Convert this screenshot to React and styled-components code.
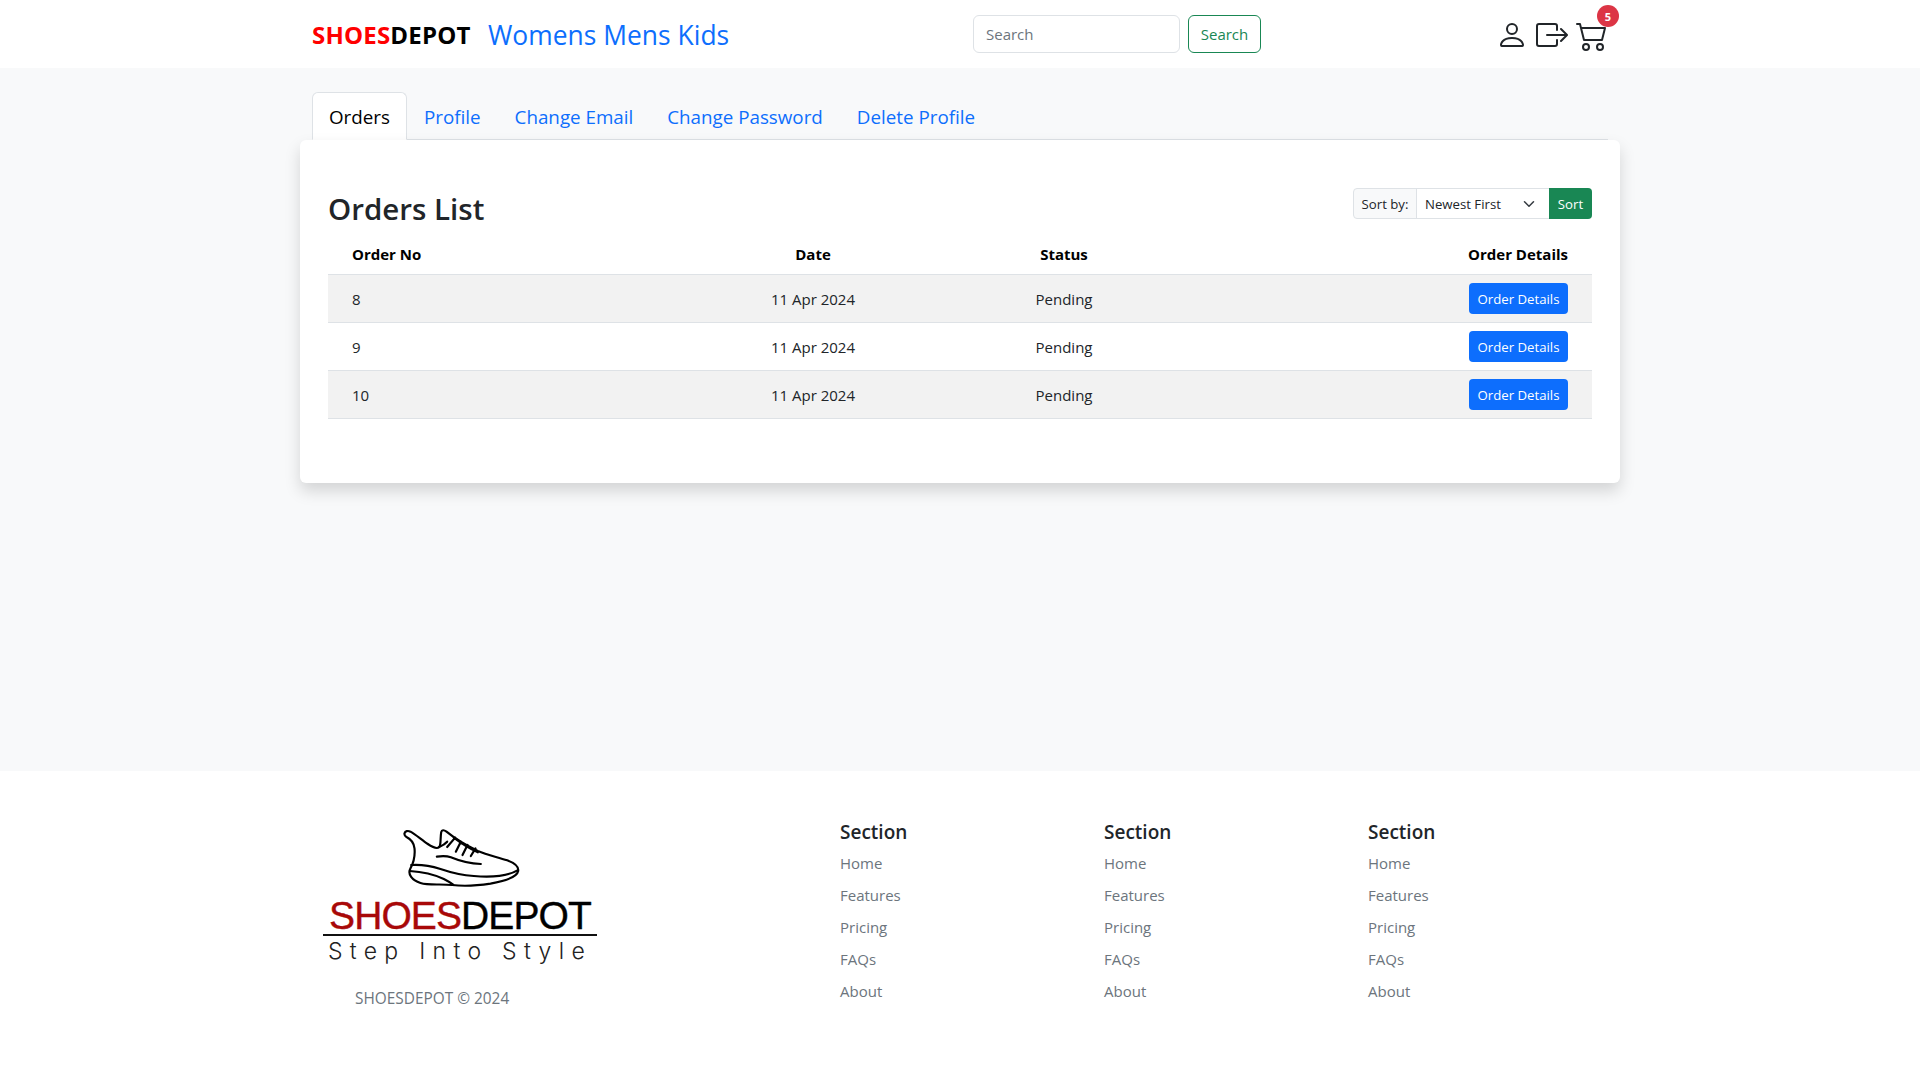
import styled, { createGlobalStyle } from 'styled-components';
import { BsPerson, BsBoxArrowRight, BsCart2 } from 'react-icons/bs';

const GlobalStyle = createGlobalStyle`
  * { box-sizing: border-box; }
  body {
    margin: 0;
    background: #f8f9fa;
    color: #212529;
    font-family: "Open Sans", "Noto Sans", sans-serif;
    font-size: 15px;
  }
  a { text-decoration: none; }
`;

const Page = styled.div`
  min-height: 100vh;
  display: flex;
  flex-direction: column;
`;

const Navbar = styled.header`
  height: 68px;
  background: #fff;
  display: flex;
  justify-content: center;
`;

const NavInner = styled.div`
  width: 1296px;
  display: flex;
  align-items: center;
  position: relative;
`;

const Brand = styled.a`
  width: 176px;
  font-size: 24px;
  font-weight: 700;
  letter-spacing: 0.2px;
  color: #000;
  span { color: #f00; }
`;

const NavLinks = styled.nav`
  display: flex;
  gap: 7px;
  font-size: 26.4px;
  width: 485px;
  padding-top: 1px;
  a { color: #0d6efd; }
`;

const SearchForm = styled.form`
  display: flex;
  gap: 8px;
`;

const SearchInput = styled.input`
  width: 207px;
  height: 38px;
  padding: 6px 12px;
  border: 1px solid #dee2e6;
  border-radius: 6px;
  background: #fff;
  font: inherit;
  color: #212529;
  &::placeholder { color: #6c757d; opacity: 1; }
`;

const SearchButton = styled.button`
  width: 73px;
  height: 38px;
  border: 1px solid #198754;
  border-radius: 6px;
  background: transparent;
  color: #198754;
  font: inherit;
`;

const Icons = styled.div`
  margin-left: auto;
  margin-top: 2px;
  display: flex;
  gap: 8px;
  position: relative;
  color: #212529;
  svg { display: block; }
`;

const Badge = styled.span`
  position: absolute;
  top: -14px;
  right: -11px;
  min-width: 22px;
  height: 22px;
  border-radius: 50%;
  background: #dc3545;
  color: #fff;
  font-size: 11px;
  font-weight: 700;
  display: flex;
  align-items: center;
  justify-content: center;
`;

const Main = styled.main`
  flex: 1;
  display: flex;
  flex-direction: column;
  align-items: center;
  padding-top: 24px;
`;

const Tabs = styled.ul`
  width: 1296px;
  height: 48px;
  margin: 0;
  padding: 0;
  list-style: none;
  display: flex;
  border-bottom: 1px solid #dee2e6;
`;

const Tab = styled.li`
  height: 48px;
  padding: 10px 16px 0;
  font-size: 18.8px;
  line-height: 28px;
  border: 1px solid ${(p) => (p.$active ? '#dee2e6' : 'transparent')};
  border-bottom-color: ${(p) => (p.$active ? '#fff' : 'transparent')};
  border-radius: 6px 6px 0 0;
  background: ${(p) => (p.$active ? '#fff' : 'transparent')};
  color: ${(p) => (p.$active ? '#000' : '#0d6efd')};
`;

const Card = styled.section`
  width: 1320px;
  height: 343px;
  padding: 48px 28px 0;
  background: #fff;
  border-radius: 6px;
  box-shadow: 0 8px 16px rgba(0, 0, 0, 0.15);
  position: relative;
`;

const CardHead = styled.div`
  height: 46px;
  display: flex;
  justify-content: space-between;
  align-items: flex-start;
`;

const Title = styled.h2`
  margin: 0;
  font-size: 29.5px;
  font-weight: 600;
  line-height: 42px;
`;

const SortGroup = styled.form`
  display: flex;
  height: 31px;
  font-size: 13.2px;
`;

const SortLabel = styled.label`
  width: 64px;
  display: flex;
  align-items: center;
  justify-content: center;
  background: #f8f9fa;
  border: 1px solid #dee2e6;
  border-radius: 4px 0 0 4px;
`;

const SortSelect = styled.select`
  width: 133px;
  margin-left: -1px;
  padding: 0 8px;
  appearance: none;
  border: 1px solid #dee2e6;
  border-right: 0;
  background: #fff url("data:image/svg+xml,%3csvg xmlns='http://www.w3.org/2000/svg' viewBox='0 0 16 16'%3e%3cpath fill='none' stroke='%23343a40' stroke-linecap='round' stroke-linejoin='round' stroke-width='2' d='m2 5 6 6 6-6'/%3e%3c/svg%3e") no-repeat right 14px center / 12px 12px;
  color: #212529;
  font: inherit;
`;

const SortButton = styled.button`
  width: 43px;
  border: 0;
  border-radius: 0 4px 4px 0;
  background: #198754;
  color: #fff;
  font: inherit;
`;

const Table = styled.table`
  width: 1264px;
  table-layout: fixed;
  border-collapse: collapse;
  font-size: 15px;
`;

const Th = styled.th`
  height: 40px;
  padding: 8px 24px;
  font-weight: 700;
  color: #000;
  text-align: ${(p) => p.$align || 'left'};
  border-bottom: 1px solid #dee2e6;
`;

const Row = styled.tr`
  background: ${(p) => (p.$striped ? '#f2f2f2' : '#fff')};
`;

const Td = styled.td`
  height: 48px;
  padding: 1px 24px 0;
  text-align: ${(p) => p.$align || 'left'};
  border-bottom: 1px solid #dee2e6;
`;

const DetailsButton = styled.button`
  width: 99px;
  height: 31px;
  padding: 0;
  border: 0;
  border-radius: 4px;
  background: #0d6efd;
  color: #fff;
  font-size: 13.2px;
  font-family: inherit;
  vertical-align: middle;
`;

const Footer = styled.footer`
  height: 294px;
  background: #fff;
  display: flex;
  justify-content: center;
`;

const FooterGrid = styled.div`
  width: 1320px;
  padding-top: 48px;
  display: grid;
  grid-template-columns: 528px repeat(3, 264px);
`;

const LogoCol = styled.div`
  padding-left: 23px;
`;

const Logo = styled.div`
  width: 274px;
  height: 150px;
  margin-top: -4px;
  display: flex;
  flex-direction: column;
  align-items: center;
  svg { display: block; }
`;

const LogoName = styled.div`
  font-family: "Liberation Sans", Arial, sans-serif;
  font-size: 39px;
  letter-spacing: -0.9px;
  line-height: 37px;
  margin-top: 2px;
  color: #000;
  width: 100%;
  text-align: center;
  border-bottom: 2px solid #111;
  -webkit-text-stroke: 0.4px currentColor;
  span { color: #a80808; }
`;

const LogoTag = styled.div`
  font-family: Inter, "Liberation Sans", sans-serif;
  font-size: 23px;
  font-weight: 300;
  letter-spacing: 7.3px;
  line-height: 28px;
  margin-top: 1px;
  white-space: nowrap;
  color: #222;
`;

const Copyright = styled.p`
  margin: 23px 0 0 32px;
  font-size: 15.4px;
  color: #6c757d;
`;

const LinkCol = styled.div`
  padding-left: 12px;
`;

const ColTitle = styled.h5`
  margin: 0 0 6px;
  font-size: 19px;
  font-weight: 600;
  line-height: 26px;
`;

const LinkList = styled.ul`
  margin: 0;
  padding: 0;
  list-style: none;
  a {
    display: block;
    height: 32px;
    line-height: 24px;
    color: #6c757d;
  }
`;

const rows = ['8', '9', '10'];
const links = ['Home', 'Features', 'Pricing', 'FAQs', 'About'];

function ShoeLogo() {
  return (
    <svg width="143" height="82" viewBox="0 0 420 240" fill="none" stroke="#000" strokeWidth="6.5" strokeLinecap="round" strokeLinejoin="round">
      <path d="M42 55C44 48 52 46 60 50C75 58 95 76 112 87C125 96 140 102 146 96C152 90 149 70 152 52C154 44 160 44 168 50C190 68 225 90 262 108C290 120 320 126 350 136C372 144 385 155 383 168C380 185 345 198 300 206C260 212 215 214 185 210C150 206 115 212 90 204C65 196 50 178 60 160C68 145 74 120 72 100C70 80 60 72 48 66C43 63 41 60 42 55Z" />
      <path d="M62 150C90 148 125 154 150 162C185 174 215 181 250 183C300 187 350 184 381 166" />
      <path d="M58 168C95 170 130 178 160 192C170 197 180 203 188 209" />
      <path d="M139 125C153 123 167 122 181 127C205 137 230 146 271 147" />
      <path d="M146 96C155 92 163 88 170 80M170 96L194 68M196 110L211 80M216 120L231 90M241 123L255 100M190 68C216 88 240 102 262 112" />
    </svg>
  );
}

export default function App() {
  return (
    <Page>
      <GlobalStyle />
      <Navbar>
        <NavInner>
          <Brand href="#"><span>SHOES</span>DEPOT</Brand>
          <NavLinks>
            <a href="#">Womens</a>
            <a href="#">Mens</a>
            <a href="#">Kids</a>
          </NavLinks>
          <SearchForm>
            <SearchInput placeholder="Search" />
            <SearchButton type="button">Search</SearchButton>
          </SearchForm>
          <Icons>
            <BsPerson size={32} />
            <BsBoxArrowRight size={32} />
            <BsCart2 size={32} />
            <Badge>5</Badge>
          </Icons>
        </NavInner>
      </Navbar>

      <Main>
        <Tabs>
          <Tab $active>Orders</Tab>
          <Tab>Profile</Tab>
          <Tab>Change Email</Tab>
          <Tab>Change Password</Tab>
          <Tab>Delete Profile</Tab>
        </Tabs>
        <Card>
          <CardHead>
            <Title>Orders List</Title>
            <SortGroup>
              <SortLabel>Sort by:</SortLabel>
              <SortSelect defaultValue="newest">
                <option value="newest">Newest First</option>
                <option value="oldest">Oldest First</option>
              </SortSelect>
              <SortButton type="button">Sort</SortButton>
            </SortGroup>
          </CardHead>
          <Table>
            <colgroup>
              <col width="322" />
              <col width="326" />
              <col width="176" />
              <col width="440" />
            </colgroup>
            <thead>
              <tr>
                <Th>Order No</Th>
                <Th $align="center">Date</Th>
                <Th $align="center">Status</Th>
                <Th $align="right">Order Details</Th>
              </tr>
            </thead>
            <tbody>
              {rows.map((no, i) => (
                <Row key={no} $striped={i % 2 === 0}>
                  <Td>{no}</Td>
                  <Td $align="center">11 Apr 2024</Td>
                  <Td $align="center">Pending</Td>
                  <Td $align="right"><DetailsButton>Order Details</DetailsButton></Td>
                </Row>
              ))}
            </tbody>
          </Table>
        </Card>
      </Main>

      <Footer>
        <FooterGrid>
          <LogoCol>
            <Logo>
              <ShoeLogo />
              <LogoName><span>SHOES</span>DEPOT</LogoName>
              <LogoTag>Step Into Style</LogoTag>
            </Logo>
            <Copyright>SHOESDEPOT © 2024</Copyright>
          </LogoCol>
          {[0, 1, 2].map((c) => (
            <LinkCol key={c}>
              <ColTitle>Section</ColTitle>
              <LinkList>
                {links.map((l) => (
                  <li key={l}><a href="#">{l}</a></li>
                ))}
              </LinkList>
            </LinkCol>
          ))}
        </FooterGrid>
      </Footer>
    </Page>
  );
}
